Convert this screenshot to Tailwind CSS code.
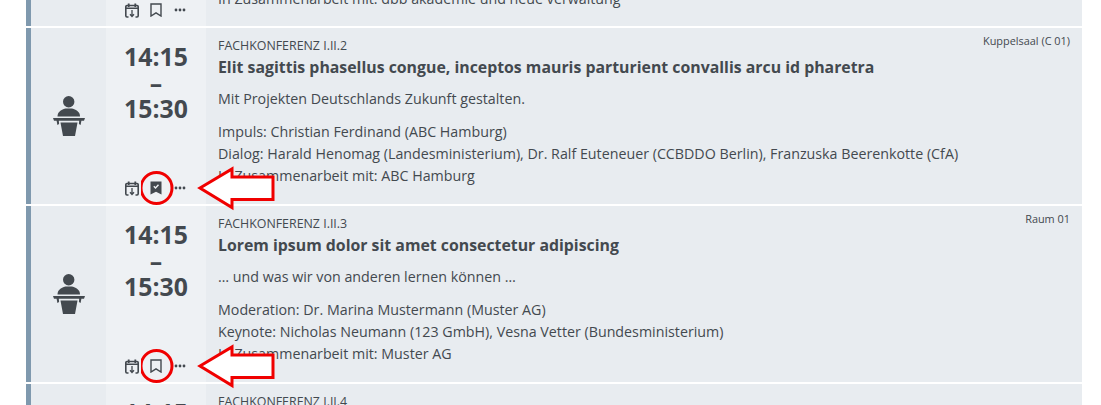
<!DOCTYPE html>
<html lang="de">
<head>
    <meta charset="UTF-8">
    <title>Programm</title>
    <script src="https://cdn.jsdelivr.net/npm/@tailwindcss/browser@4"></script>
</head>
<body class="bg-white h-[405px] overflow-hidden font-['Open_Sans',sans-serif] text-[#43494f]">

<div class="ml-[26px] w-[1056px] -mt-[150px] flex flex-col gap-[2px]">

    <!-- Zeile 1 -->
    <div class="h-[176px] flex bg-[#e8ecf0] border-l-[5px] border-[#7f99ae]">
        <div class="w-[75px]"></div>
        <div class="w-[100px] bg-[#eef1f4] flex flex-col items-center justify-end pb-[9px] pr-[2px]">
            <div class="flex items-center gap-[11px] h-[14px]">
                <svg class="w-[14px] h-[15px] shrink-0" viewBox="0 0 14 15" fill="none" stroke="#43494f" stroke-width="1.6"><path d="M3.5 2.5H2a1.2 1.2 0 0 0-1.2 1.2v9.1A1.2 1.2 0 0 0 2 14h1.5M10.5 2.5H12a1.2 1.2 0 0 1 1.2 1.2v9.1A1.2 1.2 0 0 1 12 14h-1.5M3.5 2.5h7M1 5.3h12"/><path d="M3.7 .5v3.5M10.300 .5v3.500" stroke-width="1.800"/><path d="M7 7v6.500M5 11.300l2 2.200 2-2.200" stroke-width="1.300"/></svg>
                <svg class="w-[12px] h-[14px] shrink-0" viewBox="0 0 12 14" fill="none" stroke="#43494f" stroke-width="1.400"><path d="M1 1h10v12L6 9.800 1 13z"/></svg>
                <svg class="w-[12px] h-[4px] ml-[1px] shrink-0" viewBox="0 0 12 4" fill="#43494f"><circle cx="2" cy="2" r="1.400"/><circle cx="6" cy="2" r="1.400"/><circle cx="10" cy="2" r="1.400"/></svg>
            </div>
        </div>
        <div class="flex-1 pl-3 pr-3 flex flex-col justify-end pb-[16px] text-[14.26px] leading-[22px]">
            <p>In Zusammenarbeit mit: dbb akademie und neue verwaltung</p>
        </div>
    </div>

    <!-- Zeile 2 -->
    <div class="relative h-[176px] flex bg-[#e8ecf0] border-l-[5px] border-[#7f99ae]">
        <div class="w-[75px] flex items-center justify-center">
            <svg class="w-[32px] h-[40px]" viewBox="0 0 32 40" fill="#43494f"><circle cx="15.700" cy="5.700" r="5.700"/><path d="M4.500 20.500c0-4.500 3-6.500 8-8h6.500c5 1.500 8 3.500 8 8z"/><path d="M0 22h32l-1 2.800h-2.600l-.8 4.200-1.700-1 .3-3.200H5.800l.3 3.200-1.700 1-.8-4.200H1z"/><path d="M7.500 26.500h17L22 40H10z"/></svg>
        </div>
        <div class="w-[100px] bg-[#eef1f4] flex flex-col items-center justify-between pt-[15px] pb-[9px]">
            <div class="text-center text-[24.8px] leading-[26px] font-bold">14:15<br>–<br>15:30</div>
            <div class="flex items-center gap-[11px] h-[14px] pr-[2px]">
                <svg class="w-[14px] h-[15px] shrink-0" viewBox="0 0 14 15" fill="none" stroke="#43494f" stroke-width="1.6"><path d="M3.5 2.5H2a1.2 1.2 0 0 0-1.2 1.2v9.1A1.2 1.2 0 0 0 2 14h1.5M10.5 2.5H12a1.2 1.2 0 0 1 1.2 1.2v9.1A1.2 1.2 0 0 1 12 14h-1.5M3.5 2.5h7M1 5.3h12"/><path d="M3.7 .5v3.5M10.300 .5v3.500" stroke-width="1.800"/><path d="M7 7v6.500M5 11.300l2 2.200 2-2.200" stroke-width="1.300"/></svg>
                <svg class="w-[12px] h-[14px] shrink-0" viewBox="0 0 12 14"><path d="M.5.500h11v13L6 10.800.5 13.500z" fill="#43494f"/><path d="M3.800 5.200l1.700 1.700 3-3.200" fill="none" stroke="#eef1f4" stroke-width="1.400"/></svg>
                <svg class="w-[12px] h-[4px] ml-[1px] shrink-0" viewBox="0 0 12 4" fill="#43494f"><circle cx="2" cy="2" r="1.400"/><circle cx="6" cy="2" r="1.400"/><circle cx="10" cy="2" r="1.400"/></svg>
            </div>
        </div>
        <div class="relative flex-1 pl-3 pr-3 pt-[10px] text-[14.26px] leading-[22px]">
            <span class="absolute right-3 top-[5px] text-[10.9px] leading-[16px]">Kuppelsaal (C 01)</span>
            <p class="text-[12.4px] leading-[16px]">FACHKONFERENZ I.II.2</p>
            <h3 class="mt-[2px] text-[15.85px] leading-[22px] font-bold">Elit sagittis phasellus congue, inceptos mauris parturient convallis arcu id pharetra</h3>
            <p class="mt-[10px]">Mit Projekten Deutschlands Zukunft gestalten.</p>
            <p class="mt-[11px]">Impuls: Christian Ferdinand (ABC Hamburg)</p>
            <p>Dialog: Harald Henomag (Landesministerium), Dr. Ralf Euteneuer (CCBDDO Berlin), Franzuska Beerenkotte (CfA)</p>
            <p>In Zusammenarbeit mit: ABC Hamburg</p>
        </div>
        <!-- Markierung -->
        <svg class="absolute z-10 left-[110px] top-[132px] w-[140px] h-[52px]" viewBox="0 0 140 52" fill="none">
            <circle cx="15.500" cy="28" r="15.500" stroke="#f00000" stroke-width="3"/>
            <path d="M59 28 L91 9 V17 H132 V39.500 H91 V47.500 Z" fill="#fff" stroke="#f00000" stroke-width="3"/>
        </svg>
    </div>

    <!-- Zeile 3 -->
    <div class="relative h-[176px] flex bg-[#e8ecf0] border-l-[5px] border-[#7f99ae]">
        <div class="w-[75px] flex items-center justify-center">
            <svg class="w-[32px] h-[40px]" viewBox="0 0 32 40" fill="#43494f"><circle cx="15.700" cy="5.700" r="5.700"/><path d="M4.500 20.500c0-4.500 3-6.500 8-8h6.500c5 1.500 8 3.500 8 8z"/><path d="M0 22h32l-1 2.800h-2.600l-.8 4.200-1.700-1 .3-3.200H5.800l.3 3.200-1.700 1-.8-4.200H1z"/><path d="M7.500 26.500h17L22 40H10z"/></svg>
        </div>
        <div class="w-[100px] bg-[#eef1f4] flex flex-col items-center justify-between pt-[15px] pb-[9px]">
            <div class="text-center text-[24.8px] leading-[26px] font-bold">14:15<br>–<br>15:30</div>
            <div class="flex items-center gap-[11px] h-[14px] pr-[2px]">
                <svg class="w-[14px] h-[15px] shrink-0" viewBox="0 0 14 15" fill="none" stroke="#43494f" stroke-width="1.6"><path d="M3.5 2.5H2a1.2 1.2 0 0 0-1.2 1.2v9.1A1.2 1.2 0 0 0 2 14h1.5M10.5 2.5H12a1.2 1.2 0 0 1 1.2 1.2v9.1A1.2 1.2 0 0 1 12 14h-1.5M3.5 2.5h7M1 5.3h12"/><path d="M3.7 .5v3.5M10.300 .5v3.500" stroke-width="1.800"/><path d="M7 7v6.500M5 11.300l2 2.200 2-2.200" stroke-width="1.300"/></svg>
                <svg class="w-[12px] h-[14px] shrink-0" viewBox="0 0 12 14" fill="none" stroke="#43494f" stroke-width="1.400"><path d="M1 1h10v12L6 9.800 1 13z"/></svg>
                <svg class="w-[12px] h-[4px] ml-[1px] shrink-0" viewBox="0 0 12 4" fill="#43494f"><circle cx="2" cy="2" r="1.400"/><circle cx="6" cy="2" r="1.400"/><circle cx="10" cy="2" r="1.400"/></svg>
            </div>
        </div>
        <div class="relative flex-1 pl-3 pr-3 pt-[10px] text-[14.26px] leading-[22px]">
            <span class="absolute right-3 top-[5px] text-[10.9px] leading-[16px]">Raum 01</span>
            <p class="text-[12.4px] leading-[16px]">FACHKONFERENZ I.II.3</p>
            <h3 class="mt-[2px] text-[15.85px] leading-[22px] font-bold">Lorem ipsum dolor sit amet consectetur adipiscing</h3>
            <p class="mt-[10px]">… und was wir von anderen lernen können …</p>
            <p class="mt-[11px]">Moderation: Dr. Marina Mustermann (Muster AG)</p>
            <p>Keynote: Nicholas Neumann (123 GmbH), Vesna Vetter (Bundesministerium)</p>
            <p>In Zusammenarbeit mit: Muster AG</p>
        </div>
        <svg class="absolute z-10 left-[110px] top-[132px] w-[140px] h-[52px]" viewBox="0 0 140 52" fill="none">
            <circle cx="15.500" cy="28" r="15.500" stroke="#f00000" stroke-width="3"/>
            <path d="M59 28 L91 9 V17 H132 V39.500 H91 V47.500 Z" fill="#fff" stroke="#f00000" stroke-width="3"/>
        </svg>
    </div>

    <!-- Zeile 4 -->
    <div class="h-[176px] flex bg-[#e8ecf0] border-l-[5px] border-[#7f99ae]">
        <div class="w-[75px]"></div>
        <div class="w-[100px] bg-[#eef1f4] flex flex-col items-center pt-[15px]">
            <div class="text-center text-[24.8px] leading-[26px] font-bold">14:15</div>
        </div>
        <div class="flex-1 pl-3 pr-3 pt-[10px]">
            <p class="text-[12.4px] leading-[16px]">FACHKONFERENZ I.II.4</p>
        </div>
    </div>
</div>

</body>
</html>
